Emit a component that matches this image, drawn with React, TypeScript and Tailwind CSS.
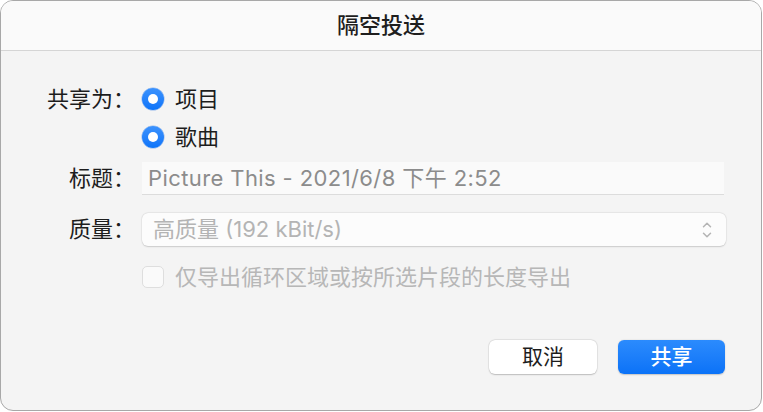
import { ChevronDown, ChevronUp } from "lucide-react";

const font = "[font-family:Inter,'Noto_Sans_CJK_SC',sans-serif]";

function Radio({ label }: { label: string }) {
  return (
    <div className="flex items-center">
      <span className="flex h-[22px] w-[22px] items-center justify-center rounded-full bg-gradient-to-b from-[#3b92fd] to-[#0a74f9] shadow-[0_0_0_0.5px_rgba(0,90,220,0.4)]">
        <span className="h-[10px] w-[10px] rounded-full bg-white" />
      </span>
      <span className="ml-[11px] text-[22px] text-[#1d1d1d]">{label}</span>
    </div>
  );
}

export default function App() {
  return (
    <div className={`h-[412px] w-[763px] bg-white ${font}`}>
      <div className="flex h-[411px] w-[762px] flex-col overflow-hidden rounded-[13px] border border-[#a8a8a8] bg-[#f4f4f4]">
        <div className="flex h-[50px] shrink-0 items-center justify-center border-b border-[#d5d5d5] bg-[#fafafa]">
          <span className="text-[22px] font-medium text-[#1e1e1e]">隔空投送</span>
        </div>

        <div className="flex flex-col pt-[29px]">
          <div className="flex h-[38px] items-center">
            <div className="w-[134px] text-right text-[22px] text-[#1d1d1d]">共享为：</div>
            <div className="ml-[7px]">
              <Radio label="项目" />
            </div>
          </div>
          <div className="flex h-[38px] items-center">
            <div className="w-[134px]" />
            <div className="ml-[7px]">
              <Radio label="歌曲" />
            </div>
          </div>

          <div className="mt-[6px] flex h-[33px] items-center">
            <div className="w-[134px] text-right text-[22px] text-[#1d1d1d]">标题：</div>
            <div className="ml-[7px] flex h-[33px] w-[582px] items-center border-b border-[#dcdcdc] bg-[#fafafa] pl-[6px] text-[22px] tracking-[0.4px] text-[#8c8c8c]">
              Picture This - 2021/6/8 下午 2:52
            </div>
          </div>

          <div className="mt-[18px] flex h-[33px] items-center">
            <div className="w-[134px] text-right text-[22px] text-[#1d1d1d]">质量：</div>
            <div className="ml-[7px] flex h-[33px] w-[584px] items-center justify-between rounded-[6px] bg-[#fcfcfc] pl-[11px] pr-[12px] text-[22px] text-[#b4b4b4] shadow-[0_0.5px_1.5px_rgba(0,0,0,0.15),0_0_0_0.5px_rgba(0,0,0,0.06)]">
              <span>高质量 (192 kBit/s)</span>
              <span className="flex flex-col items-center text-[#b5b5b5]">
                <ChevronUp size={14} strokeWidth={2.6} className="-mb-[2px]" />
                <ChevronDown size={14} strokeWidth={2.6} className="-mt-[2px]" />
              </span>
            </div>
          </div>

          <div className="mt-[14px] flex h-[34px] items-center">
            <div className="w-[134px]" />
            <div className="ml-[7px] flex items-center">
              <span className="h-[22px] w-[22px] rounded-[5px] border border-[#dedede] bg-[#fafafa]" />
              <span className="ml-[11px] text-[22px] text-[#b7b7b7]">仅导出循环区域或按所选片段的长度导出</span>
            </div>
          </div>

          <div className="mt-[46px] flex justify-end gap-[21px] pr-[36px]">
            <button className="flex h-[34px] w-[108px] items-center justify-center rounded-[6px] bg-white text-[21px] text-[#1d1d1d] shadow-[0_0.5px_1.5px_rgba(0,0,0,0.2),0_0_0_0.5px_rgba(0,0,0,0.08)]">
              取消
            </button>
            <button className="flex h-[34px] w-[107px] items-center justify-center rounded-[6px] bg-gradient-to-b from-[#2b8bfd] to-[#0a72f7] text-[21px] font-medium text-white shadow-[0_0.5px_1.5px_rgba(0,0,0,0.2)]">
              共享
            </button>
          </div>
        </div>
      </div>
    </div>
  );
}
